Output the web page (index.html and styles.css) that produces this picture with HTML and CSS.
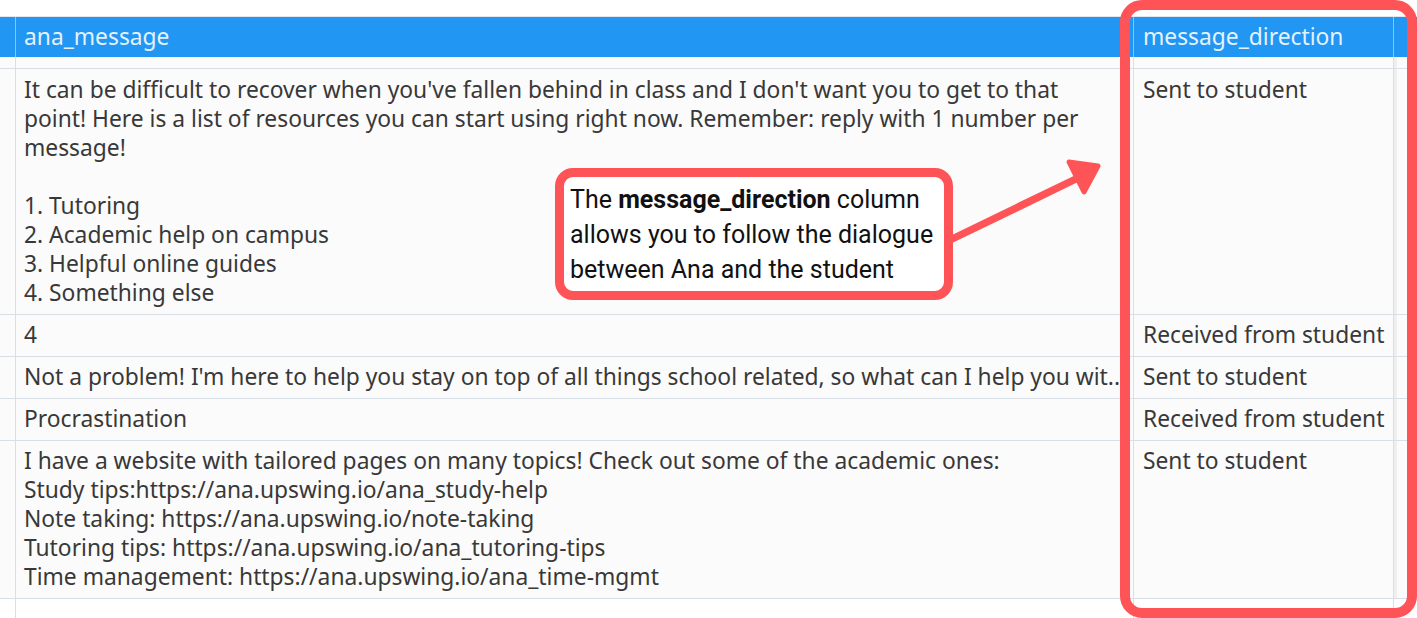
FILE: index.html
```html
<!DOCTYPE html>
<html>
<head>
<meta charset="utf-8">
<link rel="stylesheet" href="styles.css">
</head>
<body>
<div class="page">
  <div class="topstrip"></div>
  <div class="row head">
    <div class="c0"></div>
    <div class="c1">ana_message</div>
    <div class="c2">message_direction</div>
    <div class="c3"></div>
  </div>
  <div class="row spacer">
    <div class="c0"></div>
    <div class="c1"></div>
    <div class="c2"></div>
    <div class="c3"></div>
  </div>
  <div class="row first">
    <div class="c0"></div>
    <div class="c1">It can be difficult to recover when you've fallen behind in class and I don't want you to get to that<br>point! Here is a list of resources you can start using right now. Remember: reply with 1 number per<br>message!<br><br>1. Tutoring<br>2. Academic help on campus<br>3. Helpful online guides<br>4. Something else</div>
    <div class="c2">Sent to student</div>
    <div class="c3"></div>
  </div>
  <div class="row">
    <div class="c0"></div>
    <div class="c1">4</div>
    <div class="c2">Received from student</div>
    <div class="c3"></div>
  </div>
  <div class="row">
    <div class="c0"></div>
    <div class="c1 clip">Not a problem! I'm here to help you stay on top of all things school related, so what can I help you wit..</div>
    <div class="c2">Sent to student</div>
    <div class="c3"></div>
  </div>
  <div class="row">
    <div class="c0"></div>
    <div class="c1">Procrastination</div>
    <div class="c2">Received from student</div>
    <div class="c3"></div>
  </div>
  <div class="row">
    <div class="c0"></div>
    <div class="c1">I have a website with tailored pages on many topics! Check out some of the academic ones:<br>Study tips:https://ana.upswing.io/ana_study-help<br>Note taking: https://ana.upswing.io/note-taking<br>Tutoring tips: https://ana.upswing.io/ana_tutoring-tips<br>Time management: https://ana.upswing.io/ana_time-mgmt</div>
    <div class="c2">Sent to student</div>
    <div class="c3"></div>
  </div>
  <div class="row tail">
    <div class="c0"></div>
    <div class="c1"></div>
    <div class="c2"></div>
    <div class="c3"></div>
  </div>

  <div class="highlight"></div>
  <div class="callout">The <b>message_direction</b> column<br>allows you to follow the dialogue<br>between Ana and the student</div>
  <svg class="arrow" width="1417" height="618" viewBox="0 0 1417 618">
    <line x1="950" y1="240" x2="1080" y2="177" stroke="#ff5457" stroke-width="7.5" stroke-linecap="round"/>
    <polygon points="1098,166 1069,162 1084,192" fill="#ff5457" stroke="#ff5457" stroke-width="5" stroke-linejoin="round"/>
  </svg>
</div>
</body>
</html>
```

FILE: styles.css
```css
html, body {
  margin: 0;
  padding: 0;
  background: #ffffff;
}
.page {
  position: relative;
  width: 1417px;
  height: 618px;
  overflow: hidden;
  font-family: "Noto Sans", "Open Sans", sans-serif;
  font-size: 22.8px;
  color: #383838;
}
.topstrip {
  height: 16px;
  border-bottom: 1px solid #e3e6ea;
}
.row {
  display: flex;
  border-bottom: 1px solid #d9dfe6;
  background: #fbfbfb;
}
.c0 {
  width: 15px;
  flex: none;
  border-right: 1px solid #d9dfe6;
}
.c1 {
  width: 1109px;
  flex: none;
  padding: 5px 0 7px 8px;
  line-height: 29px;
  border-right: 1px solid #d9dfe6;
}
.c2 {
  width: 250px;
  flex: none;
  padding: 5px 0 7px 9px;
  line-height: 29px;
  white-space: nowrap;
  overflow: hidden;
  border-right: 1px solid #d9dfe6;
}
.c3 {
  width: 3px;
  flex: none;
  background: #efefef;
}
.first .c1, .first .c2 {
  padding-top: 6px;
  padding-bottom: 7px;
}
.clip {
  white-space: nowrap;
  overflow: hidden;
  width: 1103px;
  padding-right: 6px;
}
.head {
  background: #2196f3;
  color: #e6f1fc;
  border-bottom: none;
  height: 40px;
}
.head .c1, .head .c2 {
  padding-top: 5px;
  padding-bottom: 6px;
  border-right: 1px solid #8cc5f5;
}
.head .c0 {
  border-right: 1px solid #8cc5f5;
}
.head .c3 {
  background: #2196f3;
}
.spacer {
  height: 11px;
}
.spacer .c1, .spacer .c2, .tail .c1, .tail .c2 {
  padding: 0;
}
.spacer .c1, .tail .c1 { width: 1117px; }
.spacer .c2, .tail .c2 { width: 259px; }
.tail {
  height: 20px;
  border-bottom: none;
  background: #ffffff;
}
.tail .c3 { background: #ffffff; }
.highlight {
  position: absolute;
  left: 1120px;
  top: 0;
  width: 277px;
  height: 598px;
  border: 10px solid #ff5457;
  border-radius: 22px;
}
.callout {
  position: absolute;
  left: 555px;
  top: 168px;
  width: 371px;
  height: 106px;
  padding: 5px 3px 3px 6px;
  background: #ffffff;
  border: 9px solid #ff5457;
  border-radius: 18px;
  font-family: "Roboto", sans-serif;
  font-size: 25px;
  line-height: 35px;
  color: #111111;
  white-space: nowrap;
}
.callout b {
  font-weight: 700;
}
.arrow {
  position: absolute;
  left: 0;
  top: 0;
  pointer-events: none;
}
```
